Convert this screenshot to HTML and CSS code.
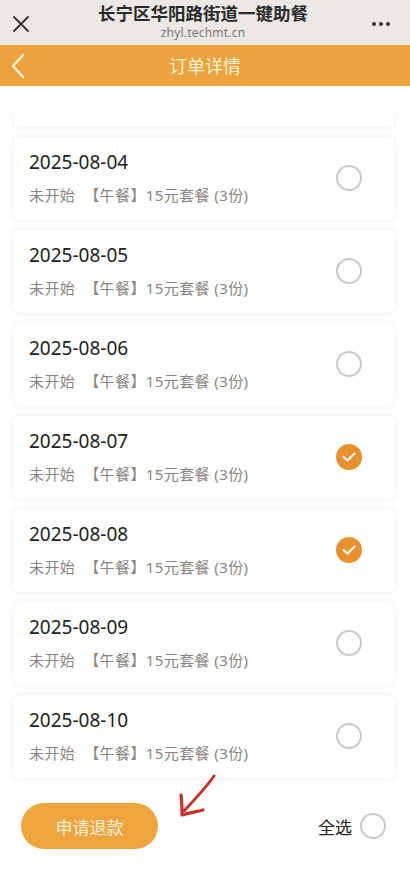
FILE: index.html
```html
<!doctype html>
<html>
  <head>
    <meta charset="utf-8" />
    <title>订单详情</title>
    <meta name="viewport" content="width = device-width, initial-scale = 1" />
    <link rel="stylesheet" href="styles.css">
  </head>
  <body>
    <div id="page">
      <div id="browserbar">
        <span class="close">
          <svg width="18" height="18" viewBox="0 0 18 18"><path d="M2 2 L16 16 M16 2 L2 16" stroke="#333" stroke-width="1.8" fill="none" stroke-linecap="round"/></svg>
        </span>
        <div class="site">
          <div class="site-title">长宁区华阳路街道一键助餐</div>
          <div class="site-url">zhyl.techmt.cn</div>
        </div>
        <span class="more"><i></i><i></i><i></i></span>
      </div>
      <div id="navbar">
        <span class="back">
          <svg width="16" height="26" viewBox="0 0 16 26"><path d="M13 2 L3 13 L13 24" stroke="#fdf3d8" stroke-width="2.4" fill="none" stroke-linecap="round" stroke-linejoin="round"/></svg>
        </span>
        <div class="nav-title">订单详情</div>
      </div>
      <div id="orders">
        <div class="list">
          <div class="order"><div class="info"><div class="date">2025-08-03</div><div class="desc"><span class="state">未开始</span>【午餐】15元套餐 (3份)</div></div><span class="radio"></span></div>
          <div class="order"><div class="info"><div class="date">2025-08-04</div><div class="desc"><span class="state">未开始</span>【午餐】15元套餐 (3份)</div></div><span class="radio"></span></div>
          <div class="order"><div class="info"><div class="date">2025-08-05</div><div class="desc"><span class="state">未开始</span>【午餐】15元套餐 (3份)</div></div><span class="radio"></span></div>
          <div class="order"><div class="info"><div class="date">2025-08-06</div><div class="desc"><span class="state">未开始</span>【午餐】15元套餐 (3份)</div></div><span class="radio"></span></div>
          <div class="order"><div class="info"><div class="date">2025-08-07</div><div class="desc"><span class="state">未开始</span>【午餐】15元套餐 (3份)</div></div><span class="radio checked"><svg width="14" height="10" viewBox="0 0 14 10"><path d="M1.5 5 L5.5 8.5 L12.5 1.5" stroke="#fff" stroke-width="2.2" fill="none" stroke-linecap="round" stroke-linejoin="round"/></svg></span></div>
          <div class="order"><div class="info"><div class="date">2025-08-08</div><div class="desc"><span class="state">未开始</span>【午餐】15元套餐 (3份)</div></div><span class="radio checked"><svg width="14" height="10" viewBox="0 0 14 10"><path d="M1.5 5 L5.5 8.5 L12.5 1.5" stroke="#fff" stroke-width="2.2" fill="none" stroke-linecap="round" stroke-linejoin="round"/></svg></span></div>
          <div class="order"><div class="info"><div class="date">2025-08-09</div><div class="desc"><span class="state">未开始</span>【午餐】15元套餐 (3份)</div></div><span class="radio"></span></div>
          <div class="order"><div class="info"><div class="date">2025-08-10</div><div class="desc"><span class="state">未开始</span>【午餐】15元套餐 (3份)</div></div><span class="radio"></span></div>
        </div>
      </div>
      <div id="footer">
        <button class="refund">申请退款</button>
        <label class="select-all">全选<span class="radio"></span></label>
        <!-- hand-drawn annotation arrow -->
        <svg class="arrow" width="50" height="50" viewBox="0 0 50 50"><path d="M42 3 C36 12 27 22 12 38" stroke="#c8322a" stroke-width="3" fill="none" stroke-linecap="round"/><path d="M9 22 C10 29 10 35 10 42 C17 40 23 39 31 37" stroke="#c8322a" stroke-width="3.2" fill="none" stroke-linecap="round" stroke-linejoin="round"/></svg>
      </div>
    </div>
  </body>
</html>
```

FILE: styles.css
```css
body,
html {
  margin: 0;
  background-color: white;
  font-family: "Noto Sans", "Noto Sans CJK SC", sans-serif;
}

#page {
  width: 410px;
  height: 870px;
  display: flex;
  flex-direction: column;
  overflow: hidden;
}

#browserbar {
  height: 45px;
  flex-shrink: 0;
  background-color: #ece8e6;
  display: flex;
  align-items: center;
  padding: 0 20px 0 12px;
}

#browserbar .close {
  width: 18px;
  height: 18px;
  display: block;
  margin-top: 2px;
}

#browserbar .site {
  flex: 1;
  text-align: center;
  margin-left: 4px;
  margin-top: -3px;
}

.site-title {
  font-size: 17.5px;
  font-weight: bold;
  color: #2a2a2a;
  line-height: 24px;
}

.site-url {
  font-size: 12px;
  color: #777;
  line-height: 16px;
  letter-spacing: 0.2px;
}

#browserbar .more {
  display: flex;
  gap: 3px;
  margin-top: 2px;
}

#browserbar .more i {
  width: 4px;
  height: 4px;
  border-radius: 50%;
  background-color: #333;
}

#navbar {
  height: 41px;
  flex-shrink: 0;
  background-color: #eca23f;
  display: flex;
  align-items: center;
  padding: 0 10px;
}

#navbar .back {
  width: 16px;
  height: 26px;
  display: block;
}

.nav-title {
  flex: 1;
  text-align: center;
  color: #fdf3d2;
  font-size: 18px;
  line-height: 26px;
  margin-right: 16px;
}

#orders {
  margin-top: 26px;
  height: 678px;
  flex-shrink: 0;
  overflow: hidden;
}

.list {
  display: flex;
  flex-direction: column;
  gap: 10px;
  margin-top: -68px;
  padding: 0 15px 0 13px;
}

.order {
  height: 83px;
  box-sizing: border-box;
  background: white;
  border-radius: 8px;
  box-shadow: 0 0 6px rgba(0, 0, 0, 0.08);
  display: flex;
  align-items: center;
  padding: 0 33px 0 16px;
}

.order .info {
  flex: 1;
  padding-bottom: 2px;
}

.date {
  font-size: 19px;
  color: #222;
  line-height: 24px;
}

.desc {
  font-size: 15px;
  color: #8a8584;
  line-height: 22px;
  margin-top: 10px;
  letter-spacing: 0.4px;
  white-space: nowrap;
}

.state {
  margin-right: 9px;
}

.radio {
  width: 26px;
  height: 26px;
  flex-shrink: 0;
  box-sizing: border-box;
  border-radius: 50%;
  border: 2px solid #ccc8c6;
  display: flex;
  align-items: center;
  justify-content: center;
  margin-top: -2px;
}

.radio.checked {
  border: none;
  background-color: #e8902e;
}

#footer {
  flex: 1;
  position: relative;
  display: flex;
  align-items: flex-start;
  padding: 13px 24px 0 21px;
}

.refund {
  width: 137px;
  height: 46px;
  border: none;
  border-radius: 23px;
  background-color: #eea53e;
  color: #fdf1dc;
  font-size: 17px;
  font-family: "Noto Sans", "Noto Sans CJK SC", sans-serif;
  padding: 0;
}

.select-all {
  margin-left: auto;
  display: flex;
  align-items: center;
  gap: 8px;
  font-size: 17px;
  color: #222;
  height: 46px;
}

.select-all .radio {
  margin-top: 0;
}

.arrow {
  position: absolute;
  left: 172px;
  top: -17px;
}
```
